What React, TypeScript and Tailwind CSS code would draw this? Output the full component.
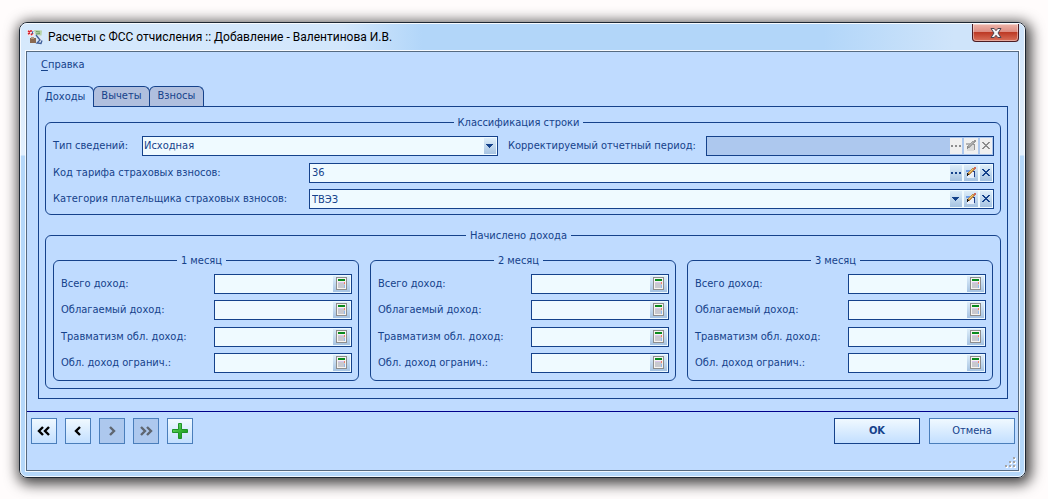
import clsx from "clsx";
import React, { useState } from "react";

const TABS = ["Доходы", "Вычеты", "Взносы"];
const MONTHS = [1, 2, 3];
const INCOME_ROWS = [
  { id: "total", label: "Всего доход:" },
  { id: "taxable", label: "Облагаемый доход:" },
  { id: "injury", label: "Травматизм обл. доход:" },
  { id: "limited", label: "Обл. доход огранич.:" },
];

/* ---------- icons ---------- */

const ArrowIcon = () => (
  <svg width="12" height="16" viewBox="0 0 12 16" fill="currentColor" shapeRendering="crispEdges">
    <path d="M2 6h7v1H2zM3 7h5v1H3zM4 8h3v1H4zM5 9h1v1H5z" />
  </svg>
);

const DotsIcon = () => (
  <svg width="12" height="16" viewBox="0 0 12 16" fill="currentColor" shapeRendering="crispEdges">
    <path d="M1 7h2v2H1zM5 7h2v2H5zM9 7h2v2H9z" />
  </svg>
);

const CrossIcon = () => (
  <svg width="12" height="16" viewBox="0 0 12 16" fill="currentColor" shapeRendering="crispEdges">
    <path d="M2 4h2v1H2zM8 4h2v1H8zM3 5h2v1H3zM7 5h2v1H7zM4 6h4v1H4zM5 7h2v1H5zM4 8h4v1H4zM3 9h2v1H3zM7 9h2v1H7zM2 10h2v1H2zM8 10h2v1H8z" />
  </svg>
);

const PencilIcon = ({ disabled }: { disabled?: boolean }) => (
  <svg width="14" height="16" viewBox="0 0 14 16" shapeRendering="crispEdges">
    <path d="M4 7h6v6H4zM3 11h2v2H3z" fill={disabled ? "#dcdcdc" : "#e8f0fc"} />
    <path d="M2 5h5v1H2zM2 6h3v1H2z" fill={disabled ? "#b5b5b5" : "#6f9fe6"} />
    <path d="M10 7h1v5h-1zM9 6h2v1H9z" fill={disabled ? "#969696" : "#1f3f8a"} />
    <path d="M8 3h2v1H8zM7 4h3v1H7zM6 5h4v1H6zM5 6h4v1H5zM4 7h4v1H4zM4 8h3v1H4zM5 9h1v1H5z" fill={disabled ? "#a0a0a0" : "#c08a48"} />
    <path d="M8 4h1v1H8zM7 5h1v1H7zM6 6h1v1H6zM5 7h1v1H5z" fill={disabled ? "#b4b4b4" : "#f3cf72"} />
    <path d="M10 2h2v1h-2zM10 3h2v1h-2zM10 4h1v1h-1z" fill={disabled ? "#989898" : "#cf6a5c"} />
    <path d="M3 8h1v3H3zM4 9h1v1H4z" fill={disabled ? "#8a8a8a" : "#1a1a1a"} />
  </svg>
);

const CalcIcon = () => (
  <svg width="17" height="16" viewBox="0 0 17 16" shapeRendering="crispEdges">
    <path d="M3 1h11v13H3z" fill="#8d8d8d" />
    <path d="M4 2h9v11H4z" fill="#f6f4f0" />
    <path d="M5 3h7v2H5z" fill="#0a8a1c" />
    <path d="M5 6h7v6H5z" fill="#c9c9cf" />
    <path d="M5 6h6v1H5z" fill="#d9c6ee" />
    <path d="M11 6h1v2h-1z" fill="#f0806a" />
    <path d="M11 9h1v3h-1z" fill="#8fb8ee" />
  </svg>
);

const AppIcon = () => (
  <svg width="16" height="16" viewBox="0 0 16 16" aria-hidden="true">
    <path d="M7 1l8 .5-.5 5L9 7z" fill="#b7d3a8" />
    <path d="M9 2.500l4 .5M9 5l4-.5" stroke="#6e9c64" />
    <path d="M0 1h7v6H1z" fill="#f4e3e6" />
    <path d="M1 2l2 1M4 1v2M1 5l2-1M4 6l2-2" stroke="#d6202c" strokeWidth="1.500" />
    <path d="M5 5l1-3" stroke="#3d66b0" />
    <path d="M3 9h6v5H3z" fill="#8b6a52" />
    <path d="M4 8h3v2H4z" fill="#b39a80" />
    <path d="M8 6l3 4-2 4 4 1 2-3-1-5-3-1z" fill="#dfe6f2" />
    <path d="M9 6l4 5-3 3 4 .5 1-3" fill="none" stroke="#3f5f9a" strokeWidth="1.300" />
  </svg>
);

const CloseIcon = () => (
  <svg width="12" height="10" viewBox="0 0 12 10" aria-hidden="true">
    <path
      d="M1 .5h3.200L6 2.700 7.800.5H11L8 5l3 4.500H7.800L6 7.300 4.200 9.500H1L4 5z"
      fill="#f5f5f5"
      stroke="#4d4450"
      strokeWidth="1"
    />
  </svg>
);

const Chevrons = ({ count, right }: { count: number; right?: boolean }) => (
  <svg
    width="14"
    height="10"
    viewBox="0 0 14 10"
    fill="none"
    stroke="currentColor"
    strokeWidth="2.400"
    className={right ? "rotate-180" : ""}
  >
    {count === 2 ? <path d="M6 1L2 5l4 4M12 1L8 5l4 4" /> : <path d="M9 1L5 5l4 4" />}
  </svg>
);

const PlusIcon = () => (
  <svg width="16" height="16" viewBox="0 0 16 16">
    <defs>
      <linearGradient id="plus" x1="0" y1="0" x2="1" y2="1">
        <stop offset="0" stopColor="#7fe07a" />
        <stop offset="0.5" stopColor="#35b535" />
        <stop offset="1" stopColor="#118a1c" />
      </linearGradient>
    </defs>
    <path d="M6.500.5h3v6h6v3h-6v6h-3v-6h-6v-3h6z" fill="url(#plus)" stroke="#1f9428" />
  </svg>
);

const SizeGrip = () => (
  <svg width="12" height="12" viewBox="0 0 12 12" shapeRendering="crispEdges" aria-hidden="true">
    <path d="M9 1h2v2H9zM5 5h2v2H5zM9 5h2v2H9zM1 9h2v2H1zM5 9h2v2H5zM9 9h2v2H9z" fill="#fff" />
    <path d="M8 0h2v2H8zM4 4h2v2H4zM8 4h2v2H8zM0 8h2v2H0zM4 8h2v2H4zM8 8h2v2H8z" fill="#a5a5a5" />
  </svg>
);

/* ---------- form parts ---------- */

interface FieldProps {
  disabled?: boolean;
  children: React.ReactNode;
}

const Field = ({ disabled, children }: FieldProps) => (
  <div
    className={clsx(
      "flex h-5 min-w-0 flex-1 items-center gap-0.5 border border-[#15428b] pr-px",
      disabled ? "bg-[#adc8ee]" : "bg-[#effaff]"
    )}
  >
    {children}
  </div>
);

interface FieldButtonProps extends React.ButtonHTMLAttributes<HTMLButtonElement> {
  label: string;
}

const FieldButton = ({ label, children, disabled, ...rest }: FieldButtonProps) => (
  <button
    type="button"
    aria-label={label}
    disabled={disabled}
    className={clsx(
      "h-4 shrink-0",
      disabled ? "bg-[#f0f0f0] text-[#8d8d8d]" : "bg-linear-to-b from-[#deeefa] to-[#a6c3e2] text-[#15428b]"
    )}
    {...rest}
  >
    {children}
  </button>
);

const inputClass = "h-full min-w-0 flex-1 bg-transparent pl-0.5 outline-none";
const labelClass = "leading-5 whitespace-nowrap";

interface GroupProps {
  title: string;
  className?: string;
  children: React.ReactNode;
}

// The extra right padding keeps the caption a little left of the middle
const Group = ({ title, className, children }: GroupProps) => (
  <fieldset className={clsx("min-w-0 rounded-md border border-[#15428b] pr-4 pl-[7px]", className)}>
    <legend className="mx-auto h-4 px-1 leading-[18px]">{title}</legend>
    <div className="-mr-2.5">{children}</div>
  </fieldset>
);

const MonthGroup = ({ month }: { month: number }) => (
  <Group title={`${month} месяц`} className="pb-[7px]">
    <div className="flex h-[105px] flex-col justify-between pt-1.5">
      {INCOME_ROWS.map((row) => (
        <div key={row.id} className="flex h-5">
          <label htmlFor={`${row.id}-${month}`} className={clsx("w-[153px] shrink-0", labelClass)}>
            {row.label}
          </label>
          <Field>
            <input id={`${row.id}-${month}`} type="text" className={inputClass} />
            <FieldButton label="Калькулятор">
              <CalcIcon />
            </FieldButton>
          </Field>
        </div>
      ))}
    </div>
  </Group>
);

interface NavButtonProps {
  label: string;
  disabled?: boolean;
  children: React.ReactNode;
}

const NavButton = ({ label, disabled, children }: NavButtonProps) => (
  <button
    type="button"
    aria-label={label}
    disabled={disabled}
    className={clsx(
      "flex size-[26px] items-center justify-center border border-[#4a7ebb]",
      disabled ? "bg-[#adc8ee] text-[#5f6670]" : "bg-linear-to-b from-[#f0f9ff] to-[#c3dfff] text-black"
    )}
  >
    {children}
  </button>
);

const App = () => {
  const [tab, setTab] = useState(0);

  return (
    <main className="min-h-screen bg-[#fffcfc] pt-[22px] pr-[22px] pb-5 pl-[19px] font-['DejaVu_Sans_Condensed','DejaVu_Sans',sans-serif] text-[11px] text-[#15428b]">
      <div className="rounded-lg border border-[#1d2733] bg-[linear-gradient(to_bottom,#d3e6fb_0,#e3f0fd_132px,#b5d8fa_133px)] shadow-[2px_3px_14px_3px_rgba(0,0,0,0.75)]">
        <div className="rounded-[7px] border border-white/80 px-1 pb-1">
          {/* Title bar */}
          <header className="-mx-1 flex h-[26px] items-center rounded-t-md bg-[linear-gradient(to_right,#d6e9fc_0,#d3e7fc_32%,#b2d6f9_40%,#b2d6f9_80%,#cfe4fa_93%)] pr-[5px] pl-1.5">
            <AppIcon />
            <h1 className="ml-[5px] flex-1 font-[Roboto,sans-serif] text-[12px] whitespace-nowrap text-black">
              Расчеты с ФСС отчисления :: Добавление - Валентинова И.В.
            </h1>
            <button
              type="button"
              aria-label="Закрыть"
              className="flex h-[18px] w-[47px] items-center justify-center self-start rounded-b border border-t-0 border-[#4b1c22] bg-[linear-gradient(to_bottom,#eeb5aa_0,#dc8b80_48%,#bd3a25_50%,#d9705a_100%)] shadow-[inset_0_0_0_1px_rgba(255,255,255,0.4)]"
            >
              <CloseIcon />
            </button>
          </header>

          <div className="border border-white/80">
            <div className="border border-[#566a80] bg-[#bfdbff]">
              <nav className="flex h-[26px] items-center px-3.5">
                <button type="button">
                  <span className="underline underline-offset-2">С</span>правка
                </button>
              </nav>

              <div className="mt-2 mr-2.5 mb-3 ml-[11px]">
                <div role="tablist" className="flex">
                  {TABS.map((name, i) => (
                    <button
                      key={name}
                      type="button"
                      role="tab"
                      aria-selected={tab === i}
                      onClick={() => setTab(i)}
                      className={clsx(
                        "h-5 rounded-t-md border border-b-0 border-[#15428b] pr-2",
                        i > 0 ? "-ml-px pl-[7px]" : "pl-1.5",
                        tab === i ? "relative -mb-px h-[21px] bg-[#bfdbff]" : "bg-[#b0bfde]"
                      )}
                    >
                      {name}
                    </button>
                  ))}
                </div>

                <div role="tabpanel" className="border border-[#15428b] px-1.5 pt-[7px] pb-[9px]">
                  <Group title="Классификация строки" className="pb-[5px]">
                    <div className="flex h-[79px] flex-col justify-between pt-1.5">
                      <div className="grid h-5 grid-cols-[89px_356fr_208px_288fr]">
                        <label htmlFor="kind" className={labelClass}>
                          Тип сведений:
                        </label>
                        <Field>
                          <select id="kind" className="h-full min-w-0 flex-1 appearance-none bg-transparent pl-px outline-none">
                            <option>Исходная</option>
                          </select>
                          <FieldButton label="Открыть список">
                            <ArrowIcon />
                          </FieldButton>
                        </Field>
                        <label htmlFor="period" className={clsx("pl-2.5", labelClass)}>
                          Корректируемый отчетный период:
                        </label>
                        <Field disabled>
                          <input id="period" type="text" disabled className={inputClass} />
                          <FieldButton label="Выбрать" disabled>
                            <DotsIcon />
                          </FieldButton>
                          <FieldButton label="Изменить" disabled>
                            <PencilIcon disabled />
                          </FieldButton>
                          <FieldButton label="Очистить" disabled>
                            <CrossIcon />
                          </FieldButton>
                        </Field>
                      </div>

                      <div className="flex h-5">
                        <label htmlFor="tariff" className={clsx("w-64 shrink-0", labelClass)}>
                          Код тарифа страховых взносов:
                        </label>
                        <Field>
                          <input id="tariff" type="text" defaultValue="36" className={inputClass} />
                          <FieldButton label="Выбрать">
                            <DotsIcon />
                          </FieldButton>
                          <FieldButton label="Изменить">
                            <PencilIcon />
                          </FieldButton>
                          <FieldButton label="Очистить">
                            <CrossIcon />
                          </FieldButton>
                        </Field>
                      </div>

                      <div className="flex h-5">
                        <label htmlFor="category" className={clsx("w-64 shrink-0", labelClass)}>
                          Категория плательщика страховых взносов:
                        </label>
                        <Field>
                          <input id="category" type="text" defaultValue="ТВЭЗ" className={inputClass} />
                          <FieldButton label="Открыть список">
                            <ArrowIcon />
                          </FieldButton>
                          <FieldButton label="Изменить">
                            <PencilIcon />
                          </FieldButton>
                          <FieldButton label="Очистить">
                            <CrossIcon />
                          </FieldButton>
                        </Field>
                      </div>
                    </div>
                  </Group>

                  <Group title="Начислено дохода" className="mt-3 pb-[7px]">
                    <div className="grid grid-cols-3 gap-[11px] pt-[9px] pr-px">
                      {MONTHS.map((month) => (
                        <MonthGroup key={month} month={month} />
                      ))}
                    </div>
                  </Group>
                </div>
              </div>

              {/* Record navigation and dialog buttons */}
              <footer className="relative flex gap-2 border-t border-[#00008b] pt-1.5 pr-[3px] pb-[26px] pl-1">
                <NavButton label="Первая запись">
                  <Chevrons count={2} />
                </NavButton>
                <NavButton label="Предыдущая запись">
                  <Chevrons count={1} />
                </NavButton>
                <NavButton label="Следующая запись" disabled>
                  <Chevrons count={1} right />
                </NavButton>
                <NavButton label="Последняя запись" disabled>
                  <Chevrons count={2} right />
                </NavButton>
                <NavButton label="Добавить">
                  <PlusIcon />
                </NavButton>
                <div className="ml-auto flex gap-[9px]">
                  <button
                    type="submit"
                    className="w-[86px] border border-[#15428b] bg-linear-to-b from-[#f0f9ff] to-[#c3dfff] font-bold"
                  >
                    OK
                  </button>
                  <button
                    type="button"
                    className="w-[86px] border border-[#4a7ebb] bg-linear-to-b from-[#f0f9ff] to-[#c3dfff]"
                  >
                    Отмена
                  </button>
                </div>
                <div className="absolute right-px bottom-px">
                  <SizeGrip />
                </div>
              </footer>
            </div>
          </div>
        </div>
      </div>
    </main>
  );
};

export default App;
